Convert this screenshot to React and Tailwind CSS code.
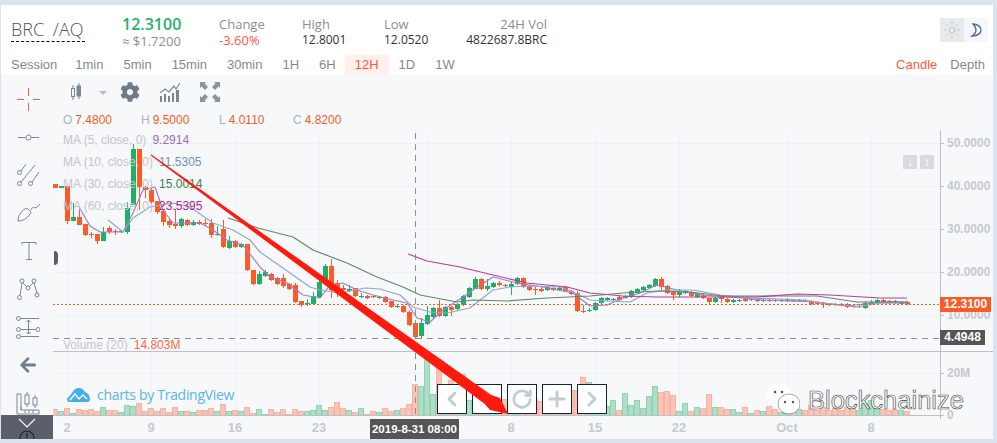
import React from "react";
import { Sun, ChevronLeft, ChevronRight, RotateCw, Plus, Minus } from "lucide-react";
import { FaCog, FaArrowLeft } from "react-icons/fa";

// [top, bottom, wickTop, wickBottom, green, volumeHeight], x = 55 + 6 * index
const CANDLES = [
  [184,188,184,188,0,6],[186,188,186,188,1,4],[186,221,186,224,0,7],[217,221,203,221,1,2],[217,225,207,225,0,6],
  [224,235,224,236,0,5],[234,235,232,238,0,6],[234,241,234,244,0,4],[232,241,227,241,1,8],[228,232,226,234,0,5],
  [231,232,229,235,0,5],[231,232,230,233,1,3],[208,232,202,234,1,10],[149,205,144,205,1,9],[149,187,149,210,0,12],
  [187,190,186,198,0,4],[190,202,186,204,0,7],[201,212,201,214,0,4],[211,222,211,226,0,7],[221,225,218,228,0,3],
  [224,226,209,229,0,8],[219,226,218,228,1,4],[220,225,219,226,0,4],[222,225,220,226,1,3],[222,224,220,225,0,5],
  [223,224,219,225,0,5],[223,235,219,238,0,7],[234,235,226,236,1,4],[229,247,220,248,0,11],[241,248,236,249,1,4],
  [241,247,240,248,0,5],[244,247,243,248,1,4],[244,270,244,271,0,8],[270,284,270,285,0,2],[274,284,271,285,1,6],
  [272,276,270,277,1,1],[274,280,273,281,0,6],[278,284,277,285,0,3],[278,286,274,288,0,6],[284,289,283,290,0,1],
  [285,302,283,303,0,6],[301,305,301,307,0,4],[303,304,299,306,1,4],[296,304,292,305,1,5],[282,297,280,298,1,10],
  [266,282,264,283,1,5],[266,290,259,298,0,8],[283,290,280,297,0,13],[288,290,285,296,0,7],[289,291,285,292,1,5],
  [288,296,288,297,0,3],[296,297,293,298,1,7],[296,298,295,299,0,1],[296,297,295,298,0,4],[297,298,296,299,1,3],
  [297,302,296,303,0,7],[301,307,301,308,0,4],[306,307,305,308,1,5],[306,312,305,313,0,7],[312,325,310,326,0,11],
  [323,337,320,339,0,31],[323,336,318,338,1,29],[315,324,306,325,1,58],[308,317,307,318,1,21],[308,316,300,317,0,53],
  [307,316,306,317,1,25],[307,310,306,316,0,35],[304,309,303,310,1,30],[296,305,295,306,1,41],[288,297,287,298,1,15],
  [279,289,277,289,1,20],[279,289,278,290,0,18],[286,289,279,291,1,22],[283,287,282,288,1,14],[283,285,281,286,0,12],
  [285,286,284,287,0,16],[284,287,282,295,1,18],[278,284,277,285,1,12],[278,287,277,288,0,14],[286,290,285,291,0,20],
  [289,290,287,295,0,16],[289,291,287,292,0,14],[287,290,286,291,1,12],[288,290,287,291,0,10],[288,290,287,291,1,12],
  [287,291,286,292,0,18],[291,294,290,295,0,25],[293,311,291,312,0,25],[311,312,305,313,0,38],[310,311,308,312,1,33],
  [303,310,302,311,1,15],[298,303,297,304,1,15],[298,300,297,301,1,9],[299,300,298,301,1,15],[297,300,296,301,0,5],
  [296,298,295,299,1,22],[291,297,290,298,1,10],[289,293,288,294,1,15],[287,290,286,291,1,7],[285,288,284,289,1,19],
  [279,286,278,287,1,29],[279,287,277,290,0,23],[286,293,285,294,0,24],[292,295,292,300,0,20],[292,295,289,297,1,4],
  [291,293,290,294,1,12],[292,296,291,297,0,4],[294,297,293,298,1,8],[295,298,294,299,0,7],[298,302,298,304,0,21],
  [298,302,297,303,1,8],[297,299,296,303,0,8],[299,302,298,303,0,6],[300,302,299,303,1,6],[300,301,299,302,1,3],
  [299,301,298,302,0,8],[299,300,298,301,1,2],[299,301,298,302,0,5],[300,301,299,302,1,4],[300,301,299,302,0,9],
  [300,301,299,302,0,6],[300,301,299,302,1,3],[300,301,298,302,1,8],[300,301,299,302,0,12],[300,301,299,302,1,6],
  [300,301,299,302,0,5],[301,304,300,305,0,10],[303,304,302,305,0,5],[303,304,302,308,0,8],[304,305,303,306,0,5],
  [304,305,303,306,0,7],[304,305,303,306,0,5],[304,307,303,308,0,8],[306,307,305,308,0,7],[306,307,305,308,1,5],
  [303,308,301,309,1,12],[302,304,300,305,1,15],[300,303,299,304,1,8],[300,302,299,303,0,6],[301,303,300,304,0,5],
  [301,303,300,304,0,6],[302,304,301,305,1,5],[302,304,301,305,0,4],
];

const MA_LINES = [
  { color: "#a57bd0", points: "79,207 90,226 100,232 123,232 133,213 143,190 155,187 163,210 173,223 200,223 213,230 227,240 243,245 260,267 270,277 287,283 303,295 320,298 330,285 343,283 357,290 373,295 393,300 407,303 417,318 430,322 443,310 463,297 473,290 493,277 517,283 543,287 573,293 590,306 607,305 623,298 640,293 657,285 677,290 703,295 730,297 763,300 817,302 847,306 873,303 907,303" },
  { color: "#8fa8cc", points: "108,220 123,232 133,218 150,207 173,203 190,207 213,223 233,230 250,240 260,252 290,273 310,287 320,290 340,293 365,288 380,289 400,295 413,307 430,312 447,313 470,308 493,290 510,287 527,286 560,287 573,292 590,300 607,301 630,302 647,293 667,290 693,290 720,295 750,298 803,300 823,303 857,307 880,303 907,302" },
  { color: "#5e8a6a", points: "228,218 258,228 293,237 313,250 347,263 377,277 403,287 420,295 457,302 473,300 507,301 547,298 590,296 623,293 657,291 690,292 723,296 773,296 817,296 857,302 907,302" },
  { color: "#c0399e", points: "408,254 427,261 460,267 493,275 527,283 567,287 590,293 623,296 657,297 707,297 757,297 797,294 830,295 880,298 907,298" },
];

const GRID_Y = [143, 186, 229, 272, 315, 373];
const GRID_X = [67, 151, 235, 319, 427, 511, 595, 679, 787, 871];
const PRICES = [["50.0000", 143], ["40.0000", 186], ["30.0000", 229], ["20.0000", 272], ["10.0000", 315], ["20M", 373], ["0", 415]];
const DATES = [["2", 67], ["9", 151], ["16", 235], ["23", 319], ["8", 511], ["15", 595], ["22", 679], ["Oct", 787], ["8", 871]];
const TABS = ["1min", "5min", "15min", "30min", "1H", "6H", "12H", "1D", "1W"];

const LEGEND = [
  ["MA (5, close, 0)", "9.2914", "text-[#9b6cc9]"],
  ["MA (10, close, 0)", "11.5305", "text-[#6d93bd]"],
  ["MA (30, close, 0)", "15.0014", "text-[#3f7d4f]"],
  ["MA (60, close, 0)", "23.5395", "text-[#b5268e]"],
];

const Tool = ({ children }) => (
  <svg width="24" height="24" viewBox="0 0 24 24" fill="none" stroke="#7b8694" strokeWidth="1">
    {children}
  </svg>
);

const TOOLS = [
  <Tool key="cross">
    <path d="M1 12.500h7M17 12.500h7M12.500 1v8M12.500 16v8" stroke="#f0623a" />
  </Tool>,
  <Tool key="line">
    <path d="M2 12.500h8M15 12.500h8" />
    <circle cx="12.500" cy="12.500" r="2.500" />
  </Tool>,
  <Tool key="fork">
    <circle cx="3.500" cy="9.500" r="2" />
    <circle cx="3.500" cy="20.500" r="2" />
    <circle cx="14.500" cy="20.500" r="2" />
    <path d="M5 8l5-7M5 19 19 2M16 19l7-10" />
  </Tool>,
  <Tool key="brush">
    <path d="M2 20c0-6 4-11 9-13l4 4c-2 5-7 9-13 9Z" />
    <path d="M15 9c1-3 3-3 5-2l4-4" />
  </Tool>,
  <Tool key="text">
    <path d="M6 5.500V3.500h14v2M13 3.500v17M10 20.500h6" />
  </Tool>,
  <Tool key="nodes">
    <circle cx="6" cy="4" r="2" />
    <circle cx="18" cy="4" r="2" />
    <circle cx="12" cy="11" r="2" />
    <circle cx="3.500" cy="20.500" r="2" />
    <circle cx="21" cy="18" r="2" />
    <path d="M6 6 4 18.500M7 6l4 4M13 10l4-4M18 6l3 10" />
  </Tool>,
  <Tool key="fib">
    <circle cx="2.500" cy="3.500" r="2" />
    <circle cx="2.500" cy="14.500" r="2" />
    <circle cx="2.500" cy="21.500" r="2" />
    <circle cx="22" cy="14.500" r="2" />
    <path d="M5 3.500h18M5 14.500h15M5 21.500h18M12.500 5v14M10.500 7l2-2 2 2M10.500 17l2 2 2-2" />
  </Tool>,
  <FaArrowLeft key="back" className="text-[#6f7f90] w-[18px] h-[18px] m-[3px]" />,
  <Tool key="ruler">
    <path d="M1 3v20h22v-4H5V3ZM5 19v-3M9 19v3M13 19v3M17 19v3" />
    <rect x="9" y="4" width="4" height="9" />
    <path d="M11 1v3M11 13v3" />
    <rect x="17" y="7" width="4" height="7" />
    <path d="M19 4v3M19 14v3" />
  </Tool>,
];

function Chart() {
  return (
    <svg width="940" height="309" viewBox="53 130 940 309" className="block">
      {GRID_Y.map((y) => (
        <path key={y} d={`M53 ${y + 0.5}H940`} stroke="#eff1f4" />
      ))}
      {GRID_X.map((x) => (
        <path key={x} d={`M${x + 0.5} 133V415`} stroke="#eff1f4" />
      ))}

      {/* candles */}
      {CANDLES.map(([top, bottom, wickTop, wickBottom, green], i) => {
        const x = 55 + 6 * i;
        const color = green ? "#1fb066" : "#ff5a26";
        return (
          <g key={i} fill={color}>
            <rect x={x} y={wickTop} width="1" height={wickBottom - wickTop} />
            <rect x={x - 2} y={top} width="5" height={Math.max(bottom - top, 1)} />
          </g>
        );
      })}

      {MA_LINES.map((line) => (
        <polyline key={line.color} points={line.points} fill="none" stroke={line.color} strokeWidth="1.2" strokeLinejoin="round" />
      ))}

      {/* volume */}
      {CANDLES.map(([, , , , green, volume], i) => (
        <rect
          key={i}
          x={52.5 + 6 * i}
          y={415.5 - volume}
          width="5"
          height={volume}
          fill={green ? "#aedfc6" : "#fcc4b4"}
          stroke={green ? "#8fd3b0" : "#f9b3a0"}
        />
      ))}

      {/* price lines and crosshair */}
      <path d="M53 304.500H940" stroke="#ff5a26" strokeDasharray="2 2" />
      <path d="M53 338.500H940" stroke="#8c8f94" strokeDasharray="6 5" />
      <path d="M415.500 133V415" stroke="#8c8f94" strokeDasharray="6 5" />

      {/* panes and axes */}
      <path d="M53 351.500H993" stroke="#bcc0c9" />
      <path d="M53 415.500H940.500" stroke="#bcc0c9" />
      <path d="M940.500 130V419" stroke="#bcc0c9" />
      {PRICES.map(([label, y]) => (
        <g key={label}>
          <path d={`M940 ${y + 0.5}h4`} stroke="#bcc0c9" />
          <text x="947" y={y + 4} fontSize="12" fontWeight="700" fill="#c6c9cf">{label}</text>
        </g>
      ))}
      {DATES.map(([label, x]) => (
        <text key={x} x={x} y="432" fontSize="13" fontWeight="700" fill="#c6c9cf" textAnchor="middle">{label}</text>
      ))}
    </svg>
  );
}

export default function App() {
  return (
    <div className="w-[997px] h-[443px] overflow-hidden flex flex-col pt-[5px] pl-[1px] pr-[4px] pb-[4px] bg-[#dde3ee] font-['Liberation_Sans',sans-serif]">
      {/* HEADER */}
      <header className="h-[70px] shrink-0 bg-white flex flex-col">
        <div className="h-[50px] flex items-start pl-[10px] pr-[5px] pt-[11px] font-['Open_Sans',sans-serif]">
          <div className="w-[111px] pt-[1px]">
            <div className="w-[74px] text-[18px] leading-[24px] font-light text-[#555] [word-spacing:4px] border-b border-dashed border-black whitespace-nowrap">BRC /AQ</div>
          </div>
          <div className="w-[97px]">
            <div className="text-[16px] leading-[17px] font-semibold text-[#25b26b]">12.3100</div>
            <div className="text-[13px] leading-[17px] text-[#8e8e8e]">≈ $1.7200</div>
          </div>
          <div className="w-[83px] text-[13px] leading-[16px]">
            <div className="text-[#8e8e8e]">Change</div>
            <div className="text-[#ff5a3c]">-3.60%</div>
          </div>
          <div className="w-[82px] text-[13px] leading-[16px]">
            <div className="text-[#8e8e8e]">High</div>
            <div className="text-[12px] text-[#333]">12.8001</div>
          </div>
          <div className="w-[82px] text-[13px] leading-[16px]">
            <div className="text-[#8e8e8e]">Low</div>
            <div className="text-[12px] text-[#333]">12.0520</div>
          </div>
          <div className="w-[81px] text-right text-[13px] leading-[16px]">
            <div className="text-[#8e8e8e]">24H Vol</div>
            <div className="text-[12px] text-[#333]">4822687.8BRC</div>
          </div>
          <div className="ml-auto flex mt-[2px]">
            <div className="w-[24px] h-[24px] bg-[#e8e9eb] flex items-center justify-center">
              <Sun className="w-[18px] h-[18px] text-[#a9b8c9]" strokeWidth={1} />
            </div>
            <div className="w-[24px] h-[24px] bg-[#f5f7fa] flex items-center justify-center">
              <svg width="12" height="14" viewBox="0 0 12 14" fill="none" stroke="#4a6a9a" strokeWidth="1.300">
                <path d="M3 1c5 0 8 3 8 6s-3 6-9 6c3-2 4-4 4-6S5 3 3 1Z" />
              </svg>
            </div>
          </div>
        </div>
        <div className="h-[20px] flex items-center text-[13px] text-[#888]">
          <span className="pl-[10px] pr-[8px]">Session</span>
          {TABS.map((tab) =>
            tab === "12H" ? (
              <span key={tab} className="h-full flex items-center px-[10px] -ml-[1px] bg-[#fff0ec] text-[#ff5a3c]">{tab}</span>
            ) : (
              <span key={tab} className="px-[10px]">{tab}</span>
            )
          )}
          <span className="ml-auto text-[#ff5a3c]">Candle</span>
          <span className="ml-[13px] mr-[8px]">Depth</span>
        </div>
      </header>

      {/* BODY */}
      <main className="flex-1 flex bg-[#f6f8fa] min-h-0">
        <aside className="w-[52px] shrink-0 flex flex-col items-center pt-[12px]">
          <div className="flex flex-col items-center gap-[14px] pl-[2px]">{TOOLS}</div>
          <div className="w-full h-[24px] bg-[#5a5f6b] flex justify-center overflow-hidden shrink-0">
            <svg width="24" height="24" viewBox="0 0 24 24" fill="none" stroke="#fff" strokeWidth="1.200">
              <path d="M4 4l8 8 8-8" />
              <circle cx="12" cy="23" r="7" stroke="#20242c" />
              <path d="M12 18v5" stroke="#20242c" />
            </svg>
          </div>
        </aside>

        <section className="flex-1 min-w-0 flex flex-col">
          <div className="h-[35px] flex items-start pt-[7px] pl-[18px]">
            <svg width="10" height="20" viewBox="0 0 10 20" fill="none" stroke="#7b8694">
              <rect x="0.500" y="6.500" width="3" height="8" />
              <rect x="6" y="4" width="3.500" height="10" fill="#7b8694" />
              <path d="M2 3v3M2 15v3M8 1v3M8 14v3" />
            </svg>
            <div className="ml-[18px] mt-[9px] w-0 h-0 border-x-[4px] border-x-transparent border-t-[4px] border-t-[#b8bcc4]" />
            <FaCog className="ml-[13px] w-[20px] h-[20px] text-[#6f7a88]" />
            <svg className="ml-[20px]" width="20" height="20" viewBox="0 0 20 20" fill="#7b8694">
              <path d="M0 14h2v6H0ZM4 12h2v8H4ZM8 14h2v6H8ZM12 11h2v9h-2ZM16 8h3v12h-3Z" />
              <path d="M0 11l5-4 4 3 5-6 2 3 4-6" fill="none" stroke="#7b8694" strokeWidth="1.200" />
            </svg>
            <svg className="ml-[20px]" width="20" height="20" viewBox="0 0 20 20" fill="#8a94a0">
              <path d="M0 0h6L4.500 1.500 8 5 5 8 1.500 4.500 0 6ZM20 0v6l-1.500-1.500L15 8l-3-3 3.500-3.500L14 0ZM0 20v-6l1.500 1.500L5 12l3 3-3.500 3.500L6 20ZM20 20h-6l1.500-1.500L12 15l3-3 3.500 3.500L20 14Z" />
            </svg>
          </div>
          <div className="h-[20px] flex items-center pl-[10px] text-[12px] text-[#ff5a26]">
            <div className="w-[78px]"><span className="text-[#a9b2c3] mr-[3px]">O</span>7.4800</div>
            <div className="w-[78px]"><span className="text-[#a9b2c3] mr-[3px]">H</span>9.5000</div>
            <div className="w-[74px]"><span className="text-[#a9b2c3] mr-[3px]">L</span>4.0110</div>
            <div><span className="text-[#a9b2c3] mr-[3px]">C</span>4.8200</div>
          </div>

          <div className="relative flex-1 min-h-0">
            <Chart />

            {/* legends */}
            <div className="absolute left-[10px] -top-[1px] flex flex-col text-[12px] leading-[22px]">
              {LEGEND.map(([label, value, color]) => (
                <div key={label} className="flex gap-[6px] whitespace-nowrap">
                  <span className="text-[#c3c6cc]">{label}</span>
                  <span className={color}>{value}</span>
                </div>
              ))}
            </div>
            <div className="absolute left-[10px] top-[207px] text-[12px] leading-[16px] whitespace-nowrap">
              <span className="text-[#c3c6cc]">Volume (20)</span>
              <span className="ml-[6px] text-[#ff6b45]">14.803M</span>
            </div>

            {/* pane handle */}
            <div className="absolute left-[1px] top-[121px] w-[4px] h-[14px] rounded-r-full bg-[#5a5f6b]" />

            {/* scale buttons */}
            <div className="absolute left-[850px] top-[25px] flex gap-[3px]">
              <div className="w-[14px] h-[14px] bg-[#d8dadd] text-white text-[12px] leading-[14px] text-center font-bold">↓</div>
              <div className="w-[14px] h-[14px] bg-[#d8dadd] text-white text-[12px] leading-[14px] text-center font-bold">↕</div>
            </div>

            {/* price tags */}
            <div className="absolute left-[887px] top-[167px] w-[51px] h-[15px] bg-[#ff5a26] text-white text-[12px] leading-[15px] font-bold text-center">12.3100</div>
            <div className="absolute left-[887px] top-[200px] w-[45px] h-[15px] bg-[#555] text-white text-[12px] leading-[15px] font-bold text-center">4.4948</div>
            <div className="absolute left-[317px] top-[289px] w-[89px] h-[20px] bg-[#555] text-white text-[11.500px] leading-[20px] font-bold text-center whitespace-nowrap">2019-8-31 08:00</div>

            {/* tradingview logo */}
            <div className="absolute left-[14px] top-[256px] flex items-center gap-[7px]">
              <svg width="23" height="14" viewBox="0 0 23 14">
                <path d="M0 11 5 5c1-3 4-5 7-5 3 0 5 2 6 4 3 1 5 4 5 7 0 2-1 3-2 3H2C1 14 0 13 0 11Z" fill="#45b0e8" />
                <path d="M3 12l5-6 4 5 4-4 4 4" fill="none" stroke="#f6f8fa" strokeWidth="1.500" />
              </svg>
              <span className="text-[14px] leading-[18px] tracking-[-0.3px] text-[#5ab5e8] font-['Open_Sans',sans-serif] whitespace-nowrap">charts by TradingView</span>
            </div>

            {/* zoom controls */}
            <div className="absolute left-[384px] top-[254px] flex gap-[5px]">
              {[
                <ChevronLeft key="l" className="w-[24px] h-[24px]" strokeWidth={3} />,
                <Minus key="m" className="w-[24px] h-[24px]" strokeWidth={3} />,
                <RotateCw key="r" className="w-[22px] h-[22px]" strokeWidth={3} />,
                <Plus key="p" className="w-[24px] h-[24px]" strokeWidth={3} />,
                <ChevronRight key="n" className="w-[24px] h-[24px]" strokeWidth={3} />,
              ].map((icon) => (
                <div key={icon.key} className="w-[30px] h-[30px] bg-white border border-[#14213a] flex items-center justify-center text-[#c0ccd6]">
                  {icon}
                </div>
              ))}
            </div>

            {/* red arrow drawn on the screenshot */}
            <svg className="absolute left-0 top-0 pointer-events-none" width="940" height="309" viewBox="53 130 940 309">
              <polygon points="151.300,154.600 491.200,395 500,398 508,414 490,410 484.800,404 150.700,155.400" fill="#ff1a0d" />
            </svg>

            {/* watermark */}
            <div className="absolute left-[714px] top-[254px] flex items-center gap-[8px]">
              <svg width="33" height="31" viewBox="0 0 33 31">
                <ellipse cx="12" cy="11" rx="12" ry="11" fill="#fff" />
                <ellipse cx="22" cy="20" rx="11" ry="10" fill="#fff" stroke="#555" strokeWidth="0.500" />
                <circle cx="8" cy="8" r="1.300" fill="#555" />
                <circle cx="15" cy="8" r="1.300" fill="#555" />
                <circle cx="18" cy="18" r="1.200" fill="#555" />
                <circle cx="26" cy="18" r="1.200" fill="#555" />
              </svg>
              <span className="text-[25.500px] leading-[30px] text-[#f8f8f8] [-webkit-text-stroke:0.6px_#444] whitespace-nowrap">Blockchainize</span>
            </div>
          </div>
        </section>
      </main>
    </div>
  );
}
